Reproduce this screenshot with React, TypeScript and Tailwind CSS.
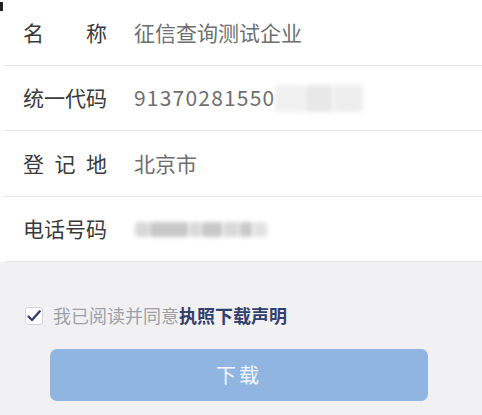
import React from 'react';

const font = { fontFamily: '"Noto Sans CJK SC", "Noto Sans", sans-serif' };

function Label({ chars }: { chars: string[] }) {
  return (
    <div className="flex w-[84px] shrink-0 justify-between text-[21px] text-[#3a3a3a]">
      {chars.map((c, i) => (
        <span key={i}>{c}</span>
      ))}
    </div>
  );
}

function Blur({ className }: { className: string }) {
  return <div className={`rounded-sm blur-[2px] ${className}`} />;
}

export default function App() {
  return (
    <div className="w-[482px] h-[415px] overflow-hidden bg-[#f1f1f3] relative" style={font}>
      <div className="absolute left-0 top-[2px] h-[9px] w-[3px] bg-[#222]" />
      <div className="bg-white pl-[4px]">
        <div className="flex h-[66px] items-center border-b border-[#e6e6e6] pl-[19px]">
          <Label chars={['名', '称']} />
          <span className="ml-[27px] text-[21px] text-[#6e6e6e]">征信查询测试企业</span>
        </div>
        <div className="flex h-[65px] items-center border-b border-[#e6e6e6] pl-[19px]">
          <Label chars={['统', '一', '代', '码']} />
          <span className="ml-[27px] text-[21px] tracking-[1.2px] text-[#6e6e6e]">91370281550</span>
          <div className="flex h-[27px] w-[88px]">
            <Blur className="h-full w-[30px] bg-[#f0f0f0]" />
            <Blur className="h-full w-[28px] bg-[#e8e8e8]" />
            <Blur className="h-full w-[30px] bg-[#eeeeee]" />
          </div>
        </div>
        <div className="flex h-[66px] items-center border-b border-[#e6e6e6] pl-[19px]">
          <Label chars={['登', '记', '地']} />
          <span className="ml-[27px] text-[21px] text-[#6e6e6e]">北京市</span>
        </div>
        <div className="flex h-[65px] items-center border-b border-[#e6e6e6] pl-[19px]">
          <Label chars={['电', '话', '号', '码']} />
          <div className="ml-[28px] flex h-[15px] w-[132px]">
            <Blur className="h-full w-[14px] bg-[#d8d8d8]" />
            <Blur className="h-full w-[40px] bg-[#c8c8c8]" />
            <Blur className="h-full w-[12px] bg-[#d9d9d9]" />
            <Blur className="h-full w-[22px] bg-[#c9c9c9]" />
            <Blur className="h-full w-[16px] bg-[#dadada]" />
            <Blur className="h-full w-[14px] bg-[#cbcbcb]" />
            <Blur className="h-full w-[14px] bg-[#e2e2e2]" />
          </div>
        </div>
      </div>

      <div className="flex items-center pl-[25px] pt-[40px]">
        <div className="flex h-[18px] w-[18px] items-center justify-center rounded-[3px] border border-[#d4d4d8] bg-white">
          <svg viewBox="0 0 16 16" className="h-[16px] w-[16px]" fill="none">
            <path d="M2.5 8.5 L6 12 L13.8 3.2" stroke="#2e3a66" strokeWidth="2.2" strokeLinecap="round" strokeLinejoin="round" />
          </svg>
        </div>
        <span className="ml-[10px] text-[18px] text-[#a0a0a4]">
          我已阅读并同意<span className="font-bold text-[#33406a]">执照下载声明</span>
        </span>
      </div>

      <div className="pl-[50px] pt-[20px]">
        <button className="flex h-[52px] w-[378px] items-center justify-center rounded-[7px] bg-[#90b5e0] text-[20px] tracking-[3px] text-[#f4f8fd]">
          下载
        </button>
      </div>
    </div>
  );
}
